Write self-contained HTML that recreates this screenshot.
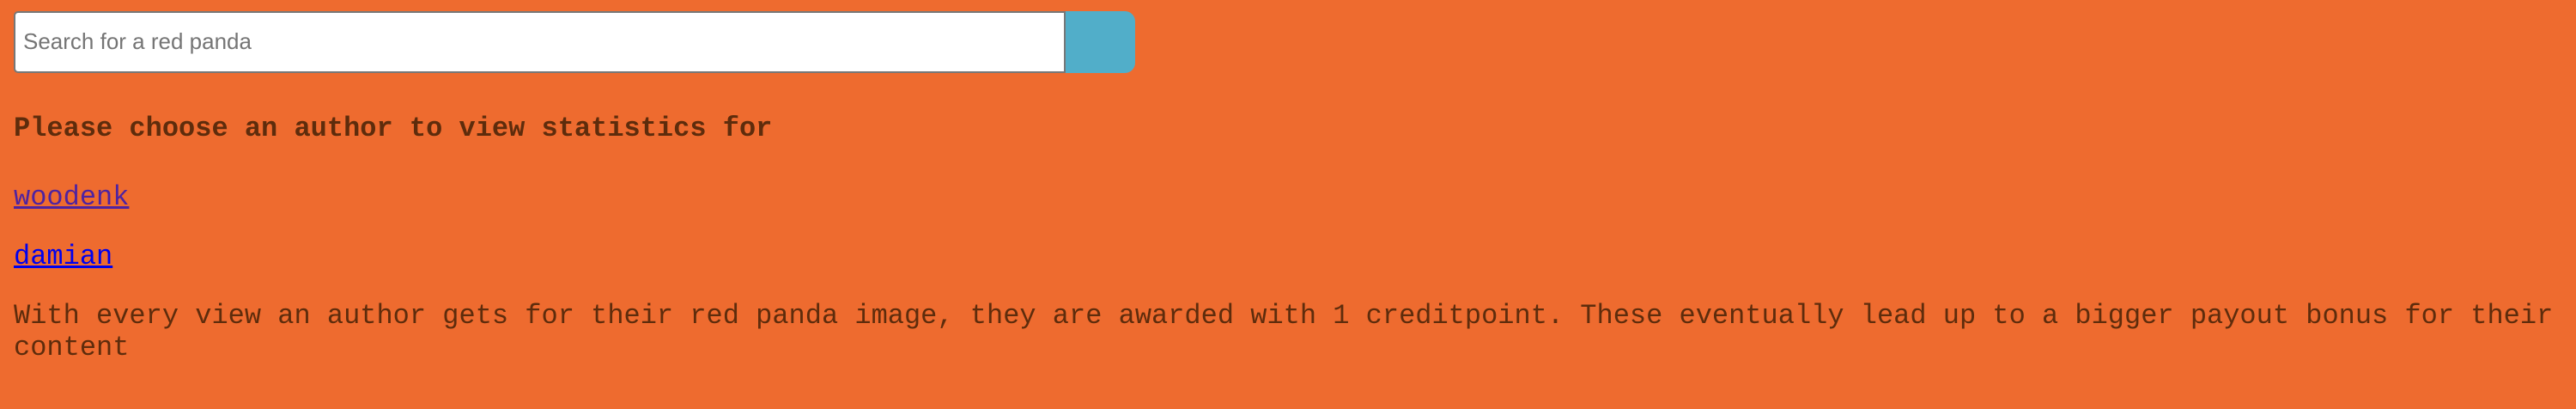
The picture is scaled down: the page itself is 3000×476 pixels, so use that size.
<!DOCTYPE html>
<html><head><meta charset="utf-8"><style>
html,body{margin:0;padding:0;}
body{width:3000px;height:476px;background:#ee6b2f;position:relative;overflow:hidden;font-family:"Liberation Mono","Courier New",monospace;color:#5e2c0c;}
.inp{position:absolute;left:16px;top:13px;width:1221px;height:68px;background:#fff;border:2px solid #777;border-radius:5px 0 0 5px;}
.ph{position:absolute;left:9px;top:18px;font-family:"Liberation Sans",Arial,sans-serif;font-size:26px;line-height:30px;color:#757575;white-space:nowrap;}
.btn{position:absolute;left:1241px;top:13px;width:81px;height:72px;background:#51aec9;border-radius:0 12px 12px 0;}
.t{position:absolute;left:16px;font-size:32px;line-height:32px;white-space:nowrap;margin:0;}
h4.t{font-weight:bold;top:134px;}
a{text-decoration:underline;}
.w{top:214px;color:#4f23a0;}
.d{top:283px;color:#0000ee;}
p.t{top:349px;line-height:37px;}
</style></head><body>
<div class="inp"><div class="ph">Search for a red panda</div></div>
<div class="btn"></div>
<h4 class="t">Please choose an author to view statistics for</h4>
<a class="t w">woodenk</a>
<a class="t d">damian</a>
<p class="t">With every view an author gets for their red panda image, they are awarded with 1 creditpoint. These eventually lead up to a bigger payout bonus for their<br>content</p>
</body></html>
